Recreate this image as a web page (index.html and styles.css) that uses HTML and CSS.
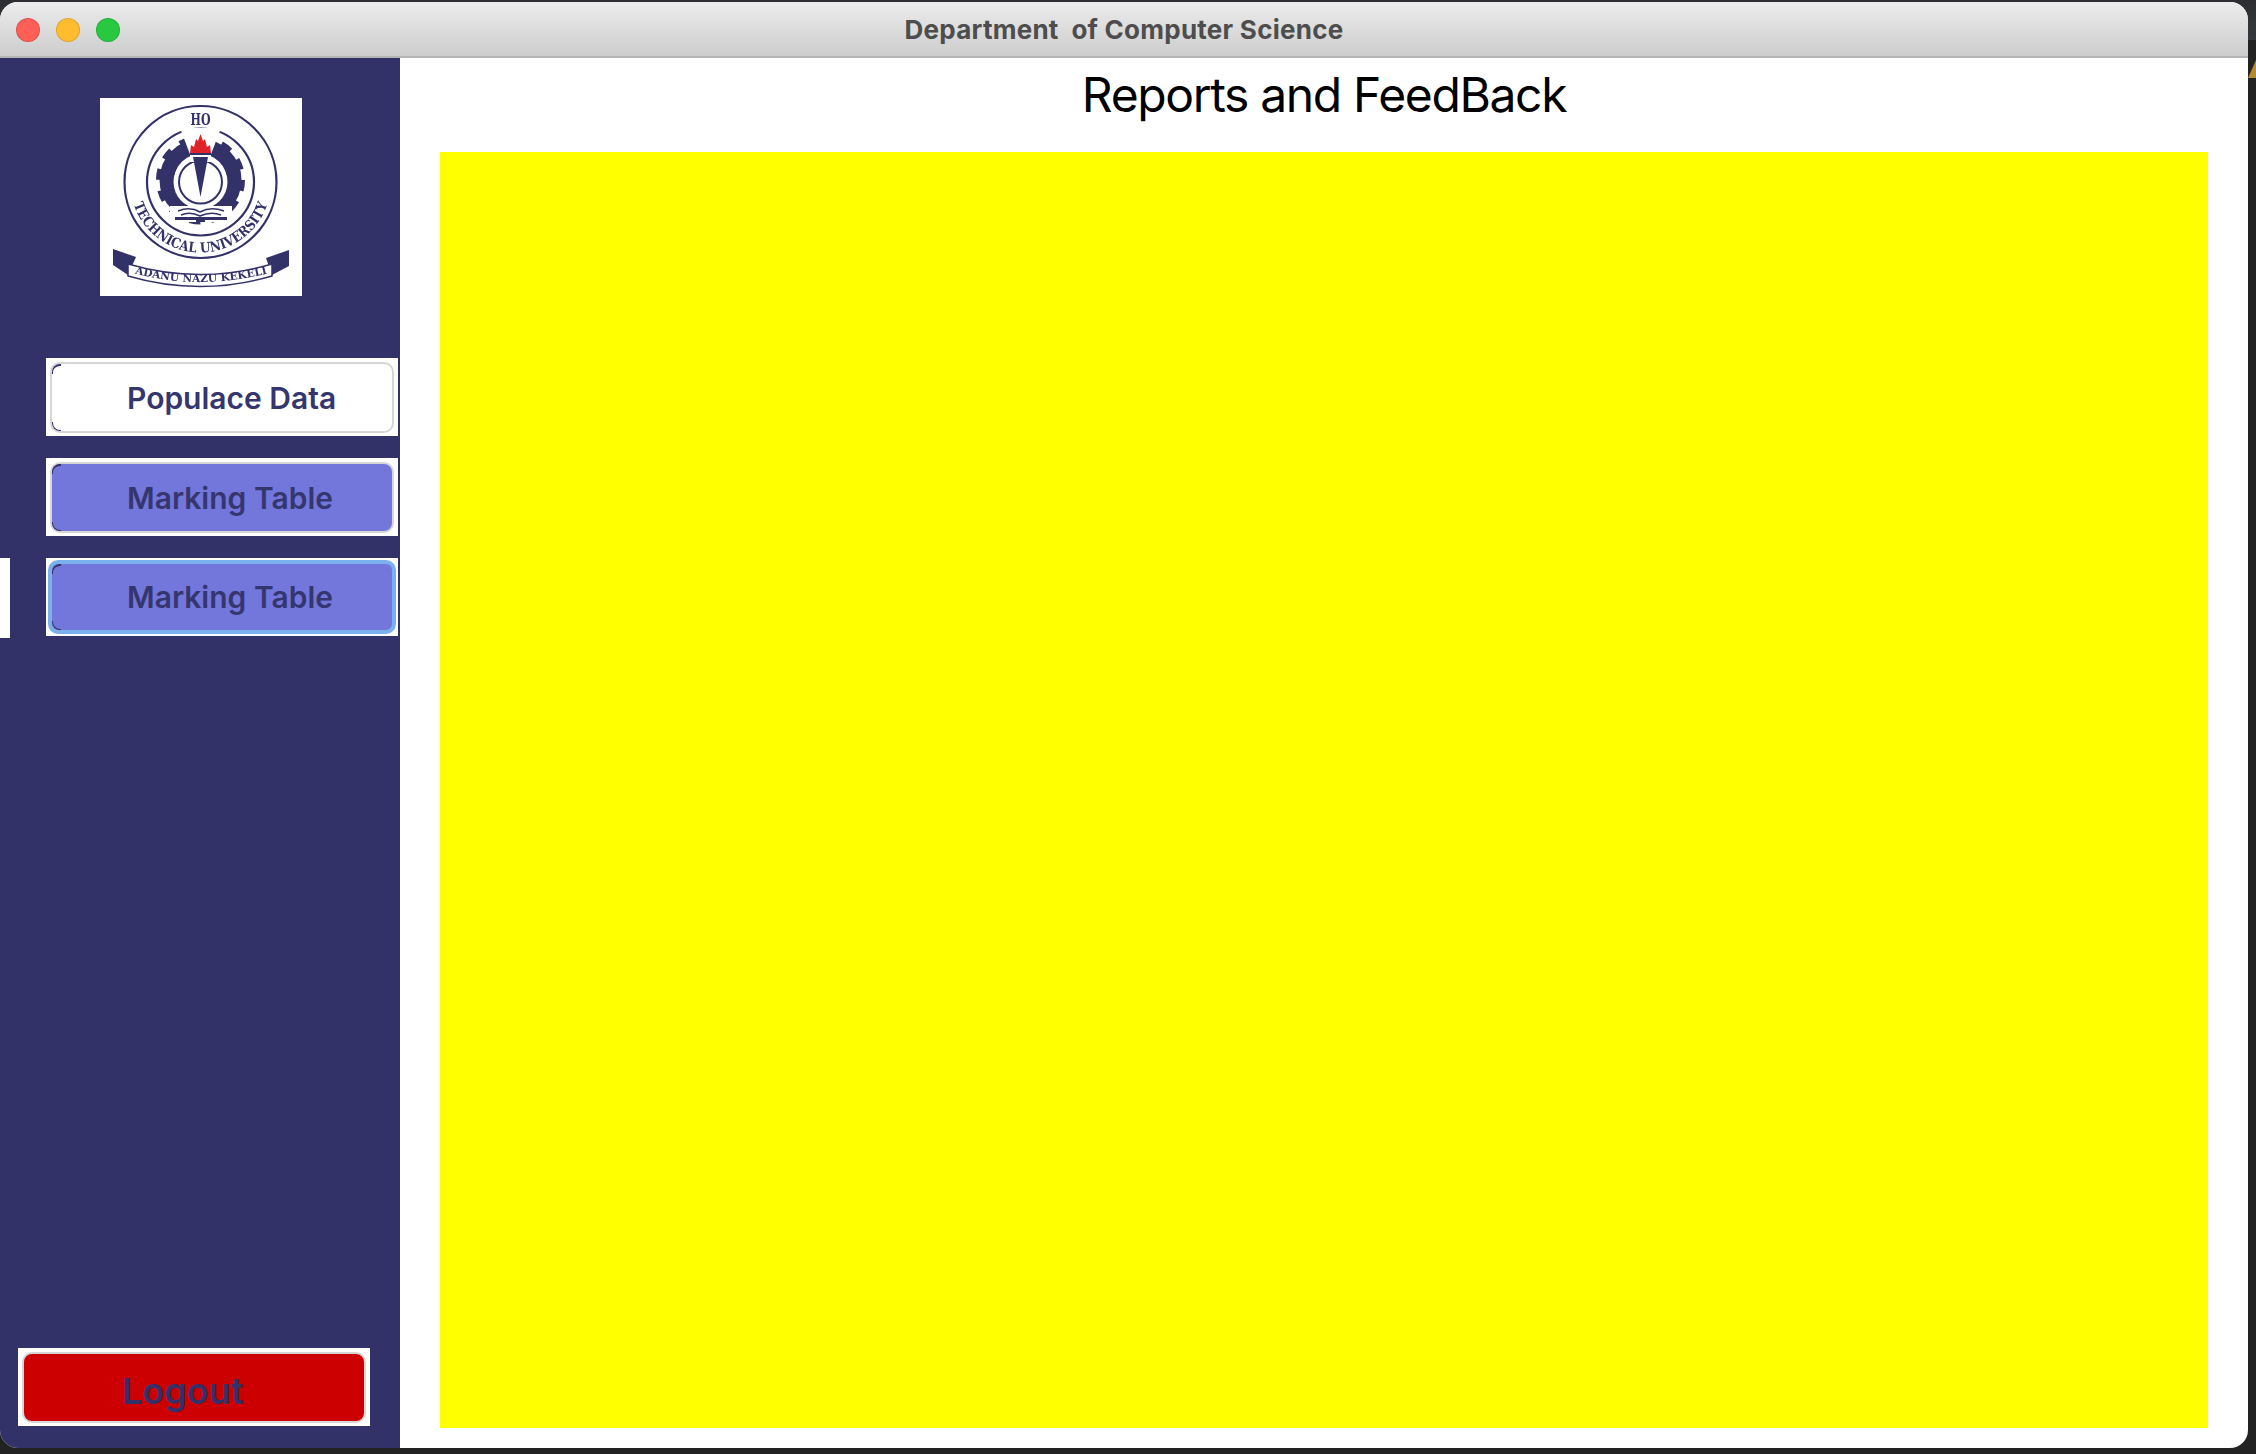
FILE: index.html

```html
<!DOCTYPE html>
<html lang="en">
<head>
  <meta charset="UTF-8">
  <meta name="viewport" content="width=device-width, initial-scale=1.0">
  <title>Department of Computer Science</title>
  <link rel="stylesheet" href="styles.css">
</head>
<body>
  <div class="desk-top"></div>
  <div class="desk-tab"></div>
  <div class="window">
    <div class="titlebar">
      <div class="lights">
        <span class="light red"></span>
        <span class="light amber"></span>
        <span class="light green"></span>
      </div>
      <div class="title">Department &nbsp;of Computer Science</div>
    </div>
    <div class="content">
      <div class="sidebar">
        <div class="logo">
          <svg width="202" height="198" viewBox="0 0 202 198">
            <defs>
              <filter id="soft"><feGaussianBlur stdDeviation="0.4"/></filter>
              <path id="uni-arc" d="M 30 84 A 70.5 70.5 0 0 0 171 84"/>
              <path id="motto-arc" d="M 33 175 Q 100 193 169 175"/>
            </defs>
            <g filter="url(#soft)">
              <circle class="ring" cx="100.500" cy="84" r="76"/>
              <circle class="ring" cx="100.500" cy="84" r="53.500"/>
              <text class="logo-ho" x="100.500" y="27" text-anchor="middle" textLength="20" lengthAdjust="spacingAndGlyphs">HO</text>

              <circle class="gear-body" cx="100.500" cy="82" r="33.500"/>
              <circle class="gear-teeth" cx="100.500" cy="82" r="41.500"/>
              <polygon class="paper" points="100.500,84 80,30 121,30"/>
              <circle class="paper" cx="100.500" cy="84" r="27"/>
              <circle class="gear-line" cx="100.500" cy="84" r="21.500"/>
              <rect class="paper" x="90" y="50" width="21" height="14"/>

              <path class="flame" d="M 90 55 L 91 47 L 94 49 L 96 41 L 98 43 L 100.500 36 L 103 43 L 105 41 L 107 49 L 110 47 L 111 55 Z"/>
              <rect class="navy" x="90" y="55" width="21" height="2"/>
              <polygon class="navy" points="93,59 108,59 100.500,99"/>

              <rect class="paper" x="70" y="108" width="62" height="16"/>
              <path class="book" d="M 78 113 Q 90 108 100 114 Q 111 108 124 113"/>
              <path class="book" d="M 81 117 Q 90 113 100 118 Q 111 113 121 117"/>
              <rect class="navy" x="75" y="119" width="52" height="3"/>
              <rect class="navy" x="96" y="122" width="9" height="2"/>

              <text class="logo-uni"><textPath href="#uni-arc" startOffset="50%" text-anchor="middle" textLength="176" lengthAdjust="spacingAndGlyphs">TECHNICAL UNIVERSITY</textPath></text>

              <polygon class="navy" points="13,151 36,159 28,177 13,167"/>
              <polygon class="navy" points="189,152 166,160 172,177 189,168"/>
              <path class="ribbon" d="M 28 166 Q 100 187 172 166 L 172 178 Q 100 199 28 178 Z"/>
              <text class="logo-motto"><textPath href="#motto-arc" startOffset="50%" text-anchor="middle" textLength="134" lengthAdjust="spacingAndGlyphs">ADANU NAZU KEKELI</textPath></text>
            </g>
          </svg>
        </div>
        <div class="nav">
          <div class="nav-row">
            <div class="nav-mark"></div>
            <div class="nav-btn"><div class="nav-face plain">Populace Data</div></div>
          </div>
          <div class="nav-row">
            <div class="nav-mark"></div>
            <div class="nav-btn"><div class="nav-face">Marking Table</div></div>
          </div>
          <div class="nav-row">
            <div class="nav-mark on"></div>
            <div class="nav-btn"><div class="nav-face focus">Marking Table</div></div>
          </div>
        </div>
        <div class="logout-btn"><div class="logout-face">Logout</div></div>
      </div>
      <div class="main">
        <h1>Reports and FeedBack</h1>
        <div class="panel"></div>
      </div>
    </div>
  </div>
</body>
</html>
```

FILE: styles.css

```css
* {
  box-sizing: border-box;
}
body {
  margin: 0;
  height: 100vh;
  overflow: hidden;
  background: #222222;
  font-family: Inter, "Liberation Sans", sans-serif;
}
.desk-top {
  position: absolute;
  top: 0;
  left: 0;
  right: 0;
  height: 40px;
  background: linear-gradient(#2c2e31, #35383c);
}
.desk-tab {
  position: absolute;
  top: 60px;
  right: 0;
  width: 0;
  height: 0;
  border-left: 8px solid transparent;
  border-bottom: 18px solid #b28a30;
}
.window {
  position: relative;
  margin-top: 2px;
  width: 2248px;
  height: 1446px;
  border-radius: 18px;
  overflow: hidden;
  display: flex;
  flex-direction: column;
  background: white;
}
.titlebar {
  position: relative;
  height: 56px;
  flex: none;
  display: flex;
  align-items: center;
  justify-content: center;
  background: linear-gradient(#ececec, #cdcdcd);
  border-bottom: 2px solid #b4b4b4;
}
.lights {
  position: absolute;
  left: 16px;
  top: 16px;
  display: flex;
  gap: 16px;
}
.light {
  width: 24px;
  height: 24px;
  border-radius: 50%;
  border: 1px solid rgba(0, 0, 0, 0.12);
}
.red {
  background: #ff5f57;
}
.amber {
  background: #febc2e;
}
.green {
  background: #28c840;
}
.title {
  font-size: 26px;
  font-weight: 700;
  letter-spacing: 0.250px;
  color: #4d4d4d;
}
.content {
  flex: 1;
  display: flex;
  min-height: 0;
}
.sidebar {
  width: 400px;
  flex: none;
  display: flex;
  flex-direction: column;
  padding-top: 40px;
  background: #333268;
}
.logo {
  width: 202px;
  height: 198px;
  margin-left: 100px;
  background: white;
}
.logo svg {
  display: block;
}
.ring {
  fill: none;
  stroke: #333268;
  stroke-width: 2.200;
}
.navy {
  fill: #333268;
}
.paper {
  fill: white;
}
.gear-body {
  fill: none;
  stroke: #333268;
  stroke-width: 15;
}
.gear-teeth {
  fill: none;
  stroke: #333268;
  stroke-width: 6;
  stroke-dasharray: 10.860 10.860;
}
.gear-line {
  fill: none;
  stroke: #333268;
  stroke-width: 2;
}
.flame {
  fill: #e0242c;
}
.book {
  fill: none;
  stroke: #333268;
  stroke-width: 1.500;
}
.ribbon {
  fill: white;
  stroke: #333268;
  stroke-width: 1.500;
}
.logo-ho {
  font-family: "DejaVu Serif", serif;
  font-size: 17px;
  font-weight: bold;
  fill: #333268;
}
.logo-uni {
  font-family: "DejaVu Serif", serif;
  font-size: 14px;
  font-weight: bold;
  fill: #333268;
}
.logo-motto {
  font-family: "DejaVu Serif", serif;
  font-size: 10.500px;
  font-weight: bold;
  fill: #333268;
}
.nav {
  display: flex;
  flex-direction: column;
  gap: 22px;
  margin-top: 62px;
}
.nav-row {
  display: flex;
  height: 78px;
}
.nav-mark {
  width: 10px;
  height: 80px;
  margin-right: 36px;
}
.nav-mark.on {
  background: white;
}
.nav-btn {
  width: 352px;
  height: 78px;
  padding: 4px 4px 3px;
  background: white;
}
.nav-face {
  position: relative;
  height: 100%;
  padding-left: 75px;
  display: flex;
  align-items: center;
  font-size: 30px;
  font-weight: 600;
  color: #36366f;
  background: #7377dc;
  border: 2px solid #d6d6d6;
  border-radius: 10px;
}
.nav-face::before,
.nav-face::after {
  content: "";
  position: absolute;
  left: 0;
  width: 8px;
  height: 8px;
  border-left: 1px solid #333268;
}
.nav-face::before {
  top: 0;
  border-top: 2px solid #333268;
  border-top-left-radius: 8px;
}
.nav-face::after {
  bottom: 0;
  border-bottom: 1px solid #333268;
  border-bottom-left-radius: 8px;
}
.nav-face.plain {
  background: white;
}
.nav-face.focus {
  margin: -2px -2px -1px;
  padding-left: 75px;
  height: calc(100% + 3px);
  border: 4px solid #7ab0ee;
}
.logout-btn {
  width: 352px;
  height: 78px;
  margin: auto 0 22px 18px;
  padding: 4px 4px 3px;
  background: white;
}
.logout-face {
  height: 100%;
  padding: 6px 0 0 98px;
  display: flex;
  align-items: center;
  font-size: 36px;
  font-weight: 600;
  color: #33306a;
  background: #cc0000;
  border: 2px solid #d6d6d6;
  border-radius: 10px;
}
.main {
  flex: 1;
  display: flex;
  flex-direction: column;
  padding: 0 40px 20px;
}
h1 {
  margin: 0;
  height: 94px;
  padding-bottom: 20px;
  font-size: 48px;
  font-weight: 400;
  line-height: 74px;
  letter-spacing: -1.350px;
  text-align: center;
  color: black;
}
.panel {
  flex: 1;
  background: #ffff00;
}
```
